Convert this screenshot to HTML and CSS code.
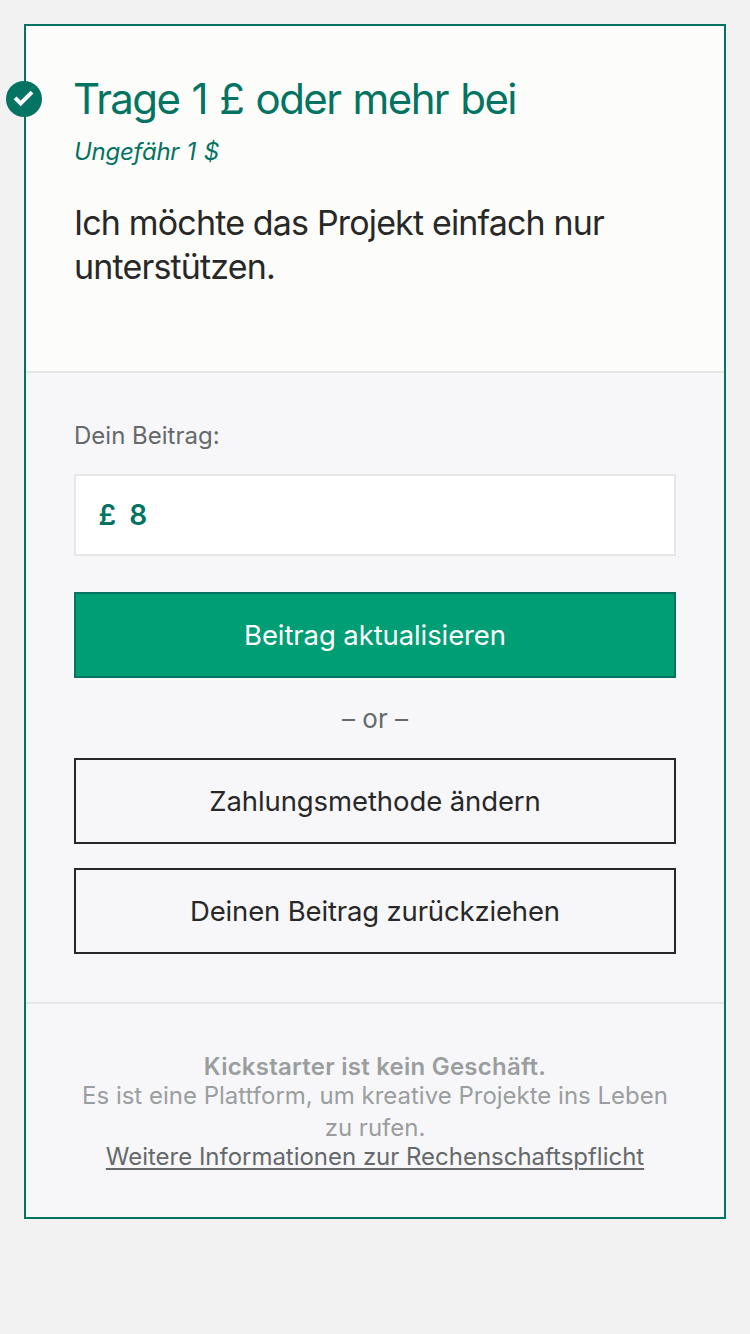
FILE: index.html
```html
<!DOCTYPE html>
<html lang="de">
<head>
<meta charset="utf-8">
<title>Beitrag</title>
<link rel="stylesheet" href="styles.css">
</head>
<body>
<main class="card">
  <svg class="badge" viewBox="0 0 36 36" aria-hidden="true">
    <circle cx="18" cy="18" r="18" fill="#037362"/>
    <path d="M9.1 16.9L14.7 22.5L26 11.1" fill="none" stroke="#fff" stroke-width="4"/>
  </svg>
  <section class="reward">
    <h1 class="title">Trage 1 £ oder mehr bei</h1>
    <p class="approx">Ungefähr 1 $</p>
    <p class="desc">Ich möchte das Projekt einfach nur<br>unterstützen.</p>
  </section>
  <section class="pledge">
    <label class="label">Dein Beitrag:</label>
    <div class="field"><span>£</span><span>8</span></div>
    <button class="btn btn-primary">Beitrag aktualisieren</button>
    <p class="or">– or –</p>
    <button class="btn">Zahlungsmethode ändern</button>
    <button class="btn btn-last">Deinen Beitrag zurückziehen</button>
  </section>
  <footer class="note">
    <strong class="note-head">Kickstarter ist kein Geschäft.</strong>
    <p class="note-text">Es ist eine Plattform, um kreative Projekte ins Leben<br>zu rufen.</p>
    <a class="link">Weitere Informationen zur Rechenschaftspflicht</a>
  </footer>
</main>
</body>
</html>
```
FILE: styles.css
```css
* { box-sizing: border-box; }
body { margin: 0; background: #f2f2f2; font-family: Inter, sans-serif; color: #282828; }
p, h1 { margin: 0; font-weight: 400; white-space: nowrap; }
.card { position: relative; width: 702px; height: 1195px; margin: 24px; border: 2px solid #037362; background: #f7f7fa; display: flex; flex-direction: column; }
.badge { position: absolute; left: -20px; top: 55px; width: 36px; height: 36px; }
.reward { height: 347px; padding: 48px; background: #fcfcfa; border-bottom: 2px solid #e6e6e6; }
.title { margin-left: -1px; font-size: 42px; line-height: 50px; color: #037362; letter-spacing: -1.6px; word-spacing: 2px; }
.approx { margin-top: 10px; font-size: 24px; line-height: 36px; font-style: italic; color: #037362; letter-spacing: -0.25px; word-spacing: 1px; }
.desc { margin-top: 31px; font-size: 34px; line-height: 44px; letter-spacing: -0.84px; }
.pledge { height: 631px; padding: 45px 48px 0; border-bottom: 2px solid #e6e6e6; display: flex; flex-direction: column; }
.label { font-size: 24px; line-height: 36px; color: #656969; }
.field { display: flex; gap: 13px; height: 82px; margin: 20px 0 36px; padding: 0 22.5px; align-items: center; border: 2px solid #e6e6e6; background: #fff; font-size: 28px; font-weight: 600; color: #037362; }
.btn { width: 602px; height: 86px; padding: 0; border: 2px solid #282828; background: transparent; font: 400 27.5px/34px Inter, sans-serif; letter-spacing: -0.1px; color: #282828; }
.btn-primary { border-color: #037362; background: #009e74; color: #fff; }
.or { height: 80px; padding-top: 1px; text-align: center; font-size: 26px; line-height: 80px; color: #656969; }
.btn-last { margin-top: 24px; letter-spacing: -0.16px; }
.note { padding-top: 48px; display: flex; flex-direction: column; align-items: center; text-align: center; font-size: 24px; line-height: 32px; color: #9b9e9e; white-space: nowrap; }
.note-head { font-weight: 600; line-height: 30px; letter-spacing: 0.24px; }
.note-text { margin-top: -2px; line-height: 32px; }
.link { line-height: 26px; color: #656969; text-decoration: underline; text-decoration-thickness: 2px; text-underline-offset: 3px; letter-spacing: -0.02px; }
```
